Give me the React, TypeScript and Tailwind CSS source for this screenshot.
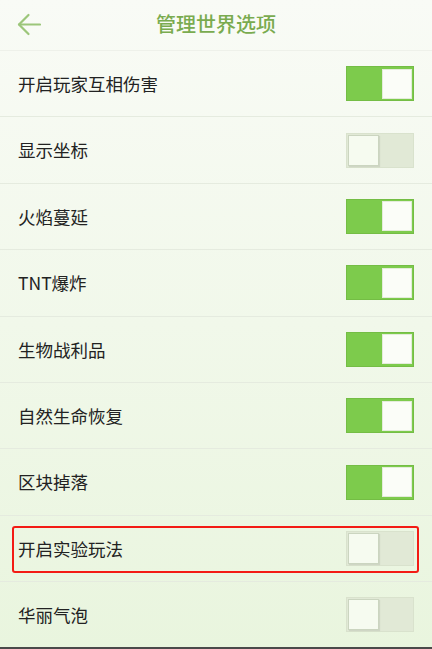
import React from "react";

const rows: { label: string; on: boolean; highlight?: boolean }[] = [
  { label: "开启玩家互相伤害", on: true },
  { label: "显示坐标", on: false },
  { label: "火焰蔓延", on: true },
  { label: "TNT爆炸", on: true },
  { label: "生物战利品", on: true },
  { label: "自然生命恢复", on: true },
  { label: "区块掉落", on: true },
  { label: "开启实验玩法", on: false, highlight: true },
  { label: "华丽气泡", on: false },
];

function Toggle({ on }: { on: boolean }) {
  if (on) {
    return (
      <div className="w-[68px] h-[35px] bg-[#7dcb4c] border border-[#74bd45] flex items-center justify-end pr-[1px]">
        <div className="w-[30px] h-[30px] bg-[#fbfdf8] border border-[#e4ecdb]" />
      </div>
    );
  }
  return (
    <div className="w-[68px] h-[35px] bg-[#e1e9d6] border border-[#d9e2cd] flex items-center justify-start pl-[1px]">
      <div className="w-[31px] h-[31px] bg-[#f6fbf0] border border-[#cbd5c0] shadow-[1px_1px_1px_rgba(0,0,0,0.08)]" />
    </div>
  );
}

export default function App() {
  return (
    <div
      className="w-[432px] h-[649px] overflow-hidden bg-gradient-to-b from-[#f9fbf6] via-[#f1f8ea] to-[#e9f5de] relative flex flex-col"
      style={{ fontFamily: '"Noto Sans CJK SC", "Noto Sans", sans-serif' }}
    >
      <div className="h-[51px] shrink-0 relative flex items-center justify-center border-b border-[#eef1ea]">
        <svg
          className="absolute left-[17px] top-[13px]"
          width="24"
          height="23"
          viewBox="0 0 24 23"
          fill="none"
          stroke="#9cc67a"
          strokeWidth="2.2"
          strokeLinecap="round"
          strokeLinejoin="round"
        >
          <path d="M23 11.5H2" />
          <path d="M11.5 2L2 11.5L11.5 21" />
        </svg>
        <span className="text-[20px] font-medium text-[#7aab4f] leading-none tracking-[0px] -mt-[2px]">
          管理世界选项
        </span>
      </div>
      {rows.map((r, i) => (
        <div
          key={i}
          className="h-[66.4px] shrink-0 flex items-center justify-between pl-[18px] pr-[18px] border-b border-[#e5ebdf] relative"
        >
          <span className="text-[17.5px] text-[#222222] leading-none">{r.label}</span>
          <Toggle on={r.on} />
          {r.highlight && (
            <div className="absolute left-[12px] right-[13px] top-[10px] bottom-[8px] border-2 border-[#f31b14] rounded-[3px]" />
          )}
        </div>
      ))}
      <div className="absolute left-0 right-0 bottom-0 h-[2px] bg-[#4a4a4a]" />
    </div>
  );
}
